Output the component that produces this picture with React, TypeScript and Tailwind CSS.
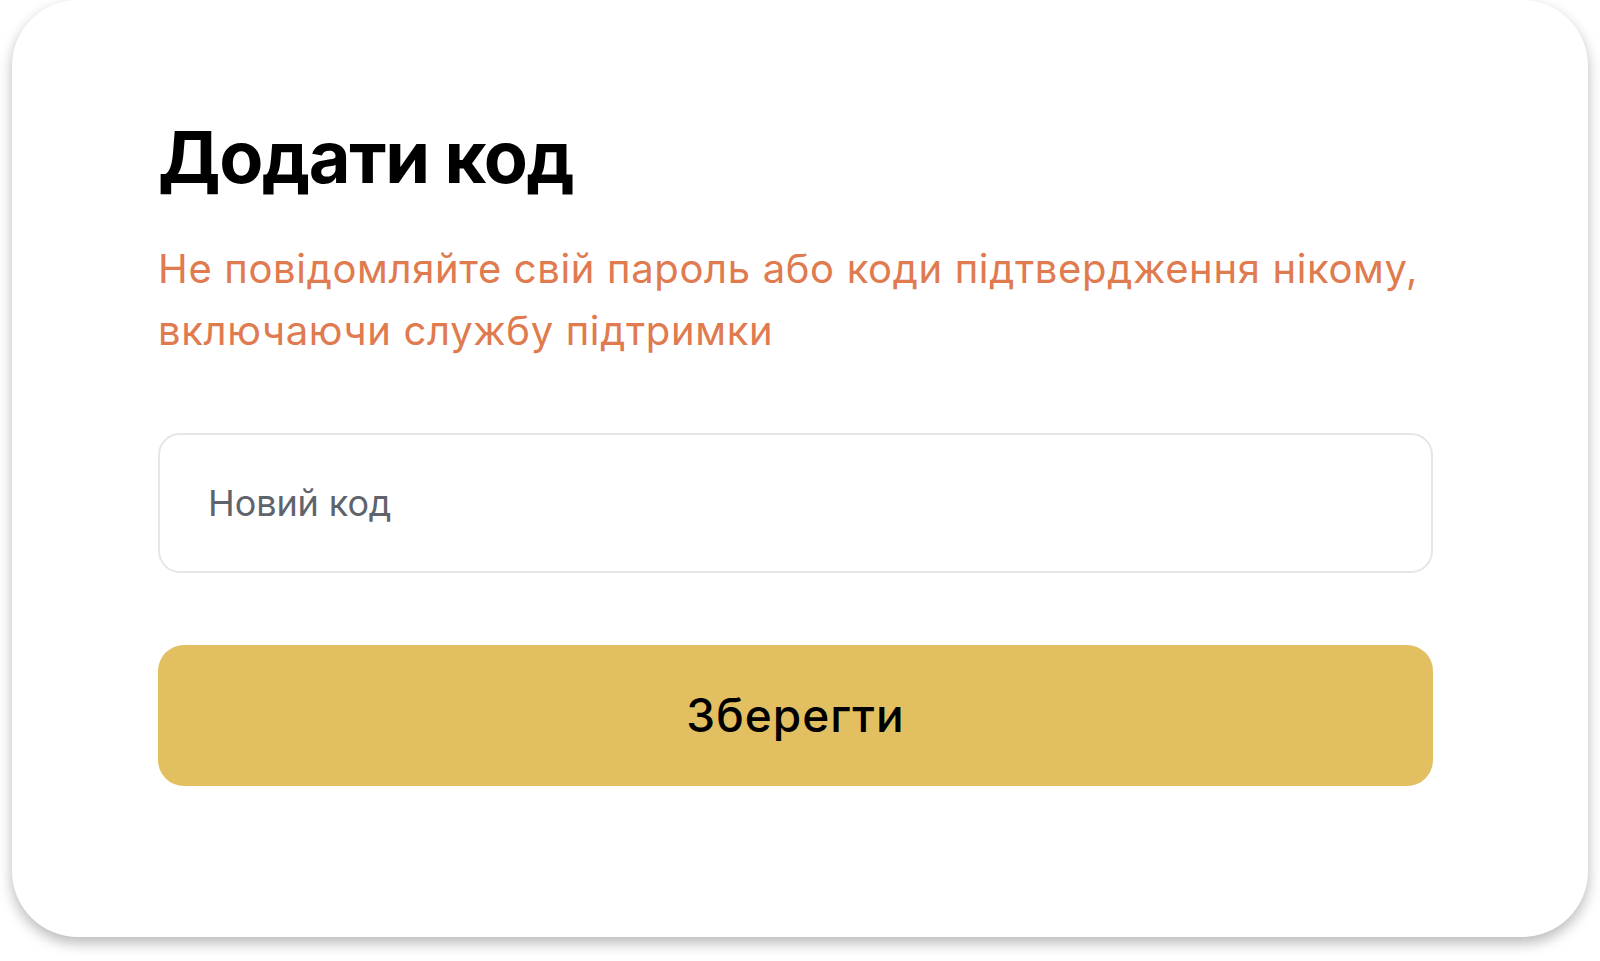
import React from "react";

export default function App() {
  return (
    <div className="w-[1600px] h-[961px] bg-white overflow-hidden px-[12px]" style={{ fontFamily: "Inter, 'Noto Sans', sans-serif" }}>
      <div className="h-[937px] bg-white rounded-[66px] shadow-[0_6px_14px_rgba(0,0,0,0.28)] pl-[146px] pr-[155px] pt-[121px] flex flex-col">
        <h1 className="text-[72px] leading-[72px] font-bold text-black tracking-[-1.3px]">Додати код</h1>
        <p className="mt-[45px] text-[40px] leading-[62px] text-[#E07A4F] tracking-[0.65px]">
          Не повідомляйте свій пароль або коди підтвердження нікому, включаючи службу підтримки
        </p>
        <div className="mt-[71px] h-[140px] rounded-[22px] border-2 border-[#e6e6e8] flex items-center pl-[48px]">
          <input
            className="w-full bg-transparent outline-none text-[36px] tracking-[-0.1px] text-[#222] placeholder:text-[#5f646c]"
            placeholder="Новий код"
          />
        </div>
        <button className="mt-[72px] h-[141px] rounded-[26px] bg-[#E2C062] text-[46px] font-medium text-black tracking-[1px] flex items-center justify-center">
          Зберегти
        </button>
      </div>
    </div>
  );
}
